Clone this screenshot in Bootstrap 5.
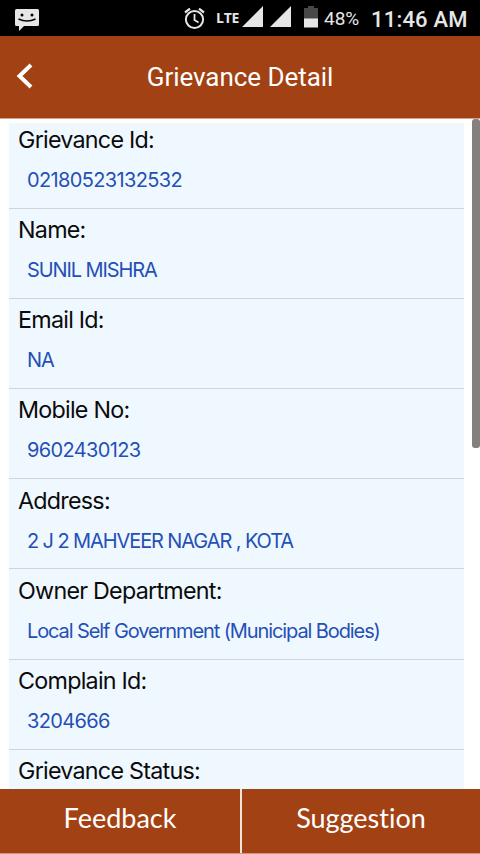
<!DOCTYPE html>
<html lang="en">
<head>
<meta charset="utf-8">
<meta name="viewport" content="width=device-width, initial-scale=1">
<title>Grievance Detail</title>
<link href="https://cdn.jsdelivr.net/npm/bootstrap@5.3.0/dist/css/bootstrap.min.css" rel="stylesheet">
<style>
  body { font-family: Inter, "Liberation Sans", sans-serif; height: 854px; background: #fff; color: #0b0b0b; }
  .status-strip { height: 36px; background: #000; color: #e6e6e6; font-family: Roboto, sans-serif; }
  .status-strip svg { display: block; flex: none; }
  .lte { font: 700 14px/36px "Open Sans", sans-serif; letter-spacing: -.2px; width: 23px; margin-left: 10px; margin-right: 3px; white-space: nowrap; }
  .pct { font-size: 19px; line-height: 37px; width: 47px; margin-left: 6px; white-space: nowrap; }
  .clock { font-size: 22px; font-weight: 500; line-height: 32px; padding-top: 4px; white-space: nowrap; width: 98px; letter-spacing: .2px; }
  .title-bar { height: 83px; background: #a24113; border-bottom: 1px solid #d9a088; color: #fff; font-family: Roboto, sans-serif; }
  .title-bar h1 { font-size: 26px; font-weight: 400; line-height: 82px; letter-spacing: -.05px; padding-right: 50px; }
  .back { width: 50px; height: 82px; }
  .scroll-area { height: 670px; padding: 4px 0 0 9px; }
  .details { width: 455px; height: 666px; background: #f0f8ff; }
  .entry { height: 90.2px; border-bottom: 1px solid #d0d5da; padding: 4.4px 9px 0; }
  .entry:first-child { height: 85.6px; padding-top: 0; }
  .entry dt { font-size: 23.3px; font-weight: 400; line-height: 34px; letter-spacing: -.75px; }
  .entry dd { font-size: 20px; font-weight: 400; line-height: 30px; letter-spacing: -1.1px; color: #2450b6; padding: 8px 0 0 9px; white-space: nowrap; }
  .entry dd.digits { letter-spacing: -.65px; }
  .thumb { width: 8px; height: 329px; margin-top: -4px; background: #85807d; border-radius: 3px; }
  .bottom-bar { height: 65px; background: #a24113; border-bottom: 1px solid #dd9270; }
  .bottom-bar .btn { color: #fff; font: 400 27px/58px Lato, sans-serif; font-variant-ligatures: none; border-radius: 0; border: 0; padding: 0 0 6px; }
  .bottom-bar .btn + .btn { border-left: 2px solid #f3e4dc; }
</style>
</head>
<body class="d-flex flex-column overflow-hidden">
<div class="status-strip d-flex align-items-center flex-shrink-0">
  <svg width="184" height="36" viewBox="0 0 184 36"><path fill="#e6e6e6" d="M16.500 9h21q1.500 0 1.500 1.500v14q0 1.500-1.500 1.500H24l-5 5v-5h-2.500q-1.500 0-1.500-1.500v-14q0-1.500 1.500-1.500z"/><circle cx="22" cy="15" r="1.500"/><circle cx="32" cy="15" r="1.500"/><path d="M18.500 19q8.500 4 17 0" fill="none" stroke="#000" stroke-width="1.600"/></svg>
  <svg width="22" height="36" viewBox="0 0 22 36" fill="none" stroke="#e6e6e6"><circle cx="10.500" cy="19.500" r="8.600" stroke-width="2"/><path d="M10.500 14v6l4 2.500" stroke-width="1.800"/><path d="M1 12.500 6 8.700M20 12.500l-5-3.800" stroke-width="2.200"/></svg>
  <span class="lte">LTE</span>
  <svg width="76" height="36" viewBox="0 0 76 36" fill="#e6e6e6"><path d="M0 27 21 6v21zM28 27 49 6v21z"/><path fill="#484848" d="M62 8h4V6h6v2h4v11H62z"/><path d="M62 18.500h14V27.500H62z"/></svg>
  <span class="pct">48%</span><span class="clock">11:46 AM</span>
</div>
<header class="title-bar d-flex flex-shrink-0">
  <svg class="back flex-shrink-0" viewBox="0 0 50 82" fill="none" stroke="#fff" stroke-width="4"><path d="M31 29 19.500 40 31 51"/></svg>
  <h1 class="flex-grow-1 text-center m-0">Grievance Detail</h1>
</header>
<main class="scroll-area d-flex justify-content-between flex-shrink-0 overflow-hidden">
  <dl class="details m-0 overflow-hidden">
    <div class="entry"><dt>Grievance Id:</dt><dd class="digits m-0">02180523132532</dd></div>
    <div class="entry"><dt>Name:</dt><dd class="m-0">SUNIL MISHRA</dd></div>
    <div class="entry"><dt>Email Id:</dt><dd class="m-0">NA</dd></div>
    <div class="entry"><dt>Mobile No:</dt><dd class="digits m-0">9602430123</dd></div>
    <div class="entry"><dt>Address:</dt><dd class="m-0">2 J 2 MAHVEER NAGAR , KOTA</dd></div>
    <div class="entry"><dt>Owner Department:</dt><dd class="m-0">Local Self Government (Municipal Bodies)</dd></div>
    <div class="entry"><dt>Complain Id:</dt><dd class="digits m-0">3204666</dd></div>
    <div class="entry"><dt>Grievance Status:</dt></div>
  </dl>
  <div class="thumb"></div>
</main>
<footer class="bottom-bar d-flex flex-shrink-0">
  <button type="button" class="btn w-50">Feedback</button>
  <button type="button" class="btn w-50">Suggestion</button>
</footer>
<script src="https://cdn.jsdelivr.net/npm/bootstrap@5.3.0/dist/js/bootstrap.bundle.min.js"></script>
</body>
</html>
